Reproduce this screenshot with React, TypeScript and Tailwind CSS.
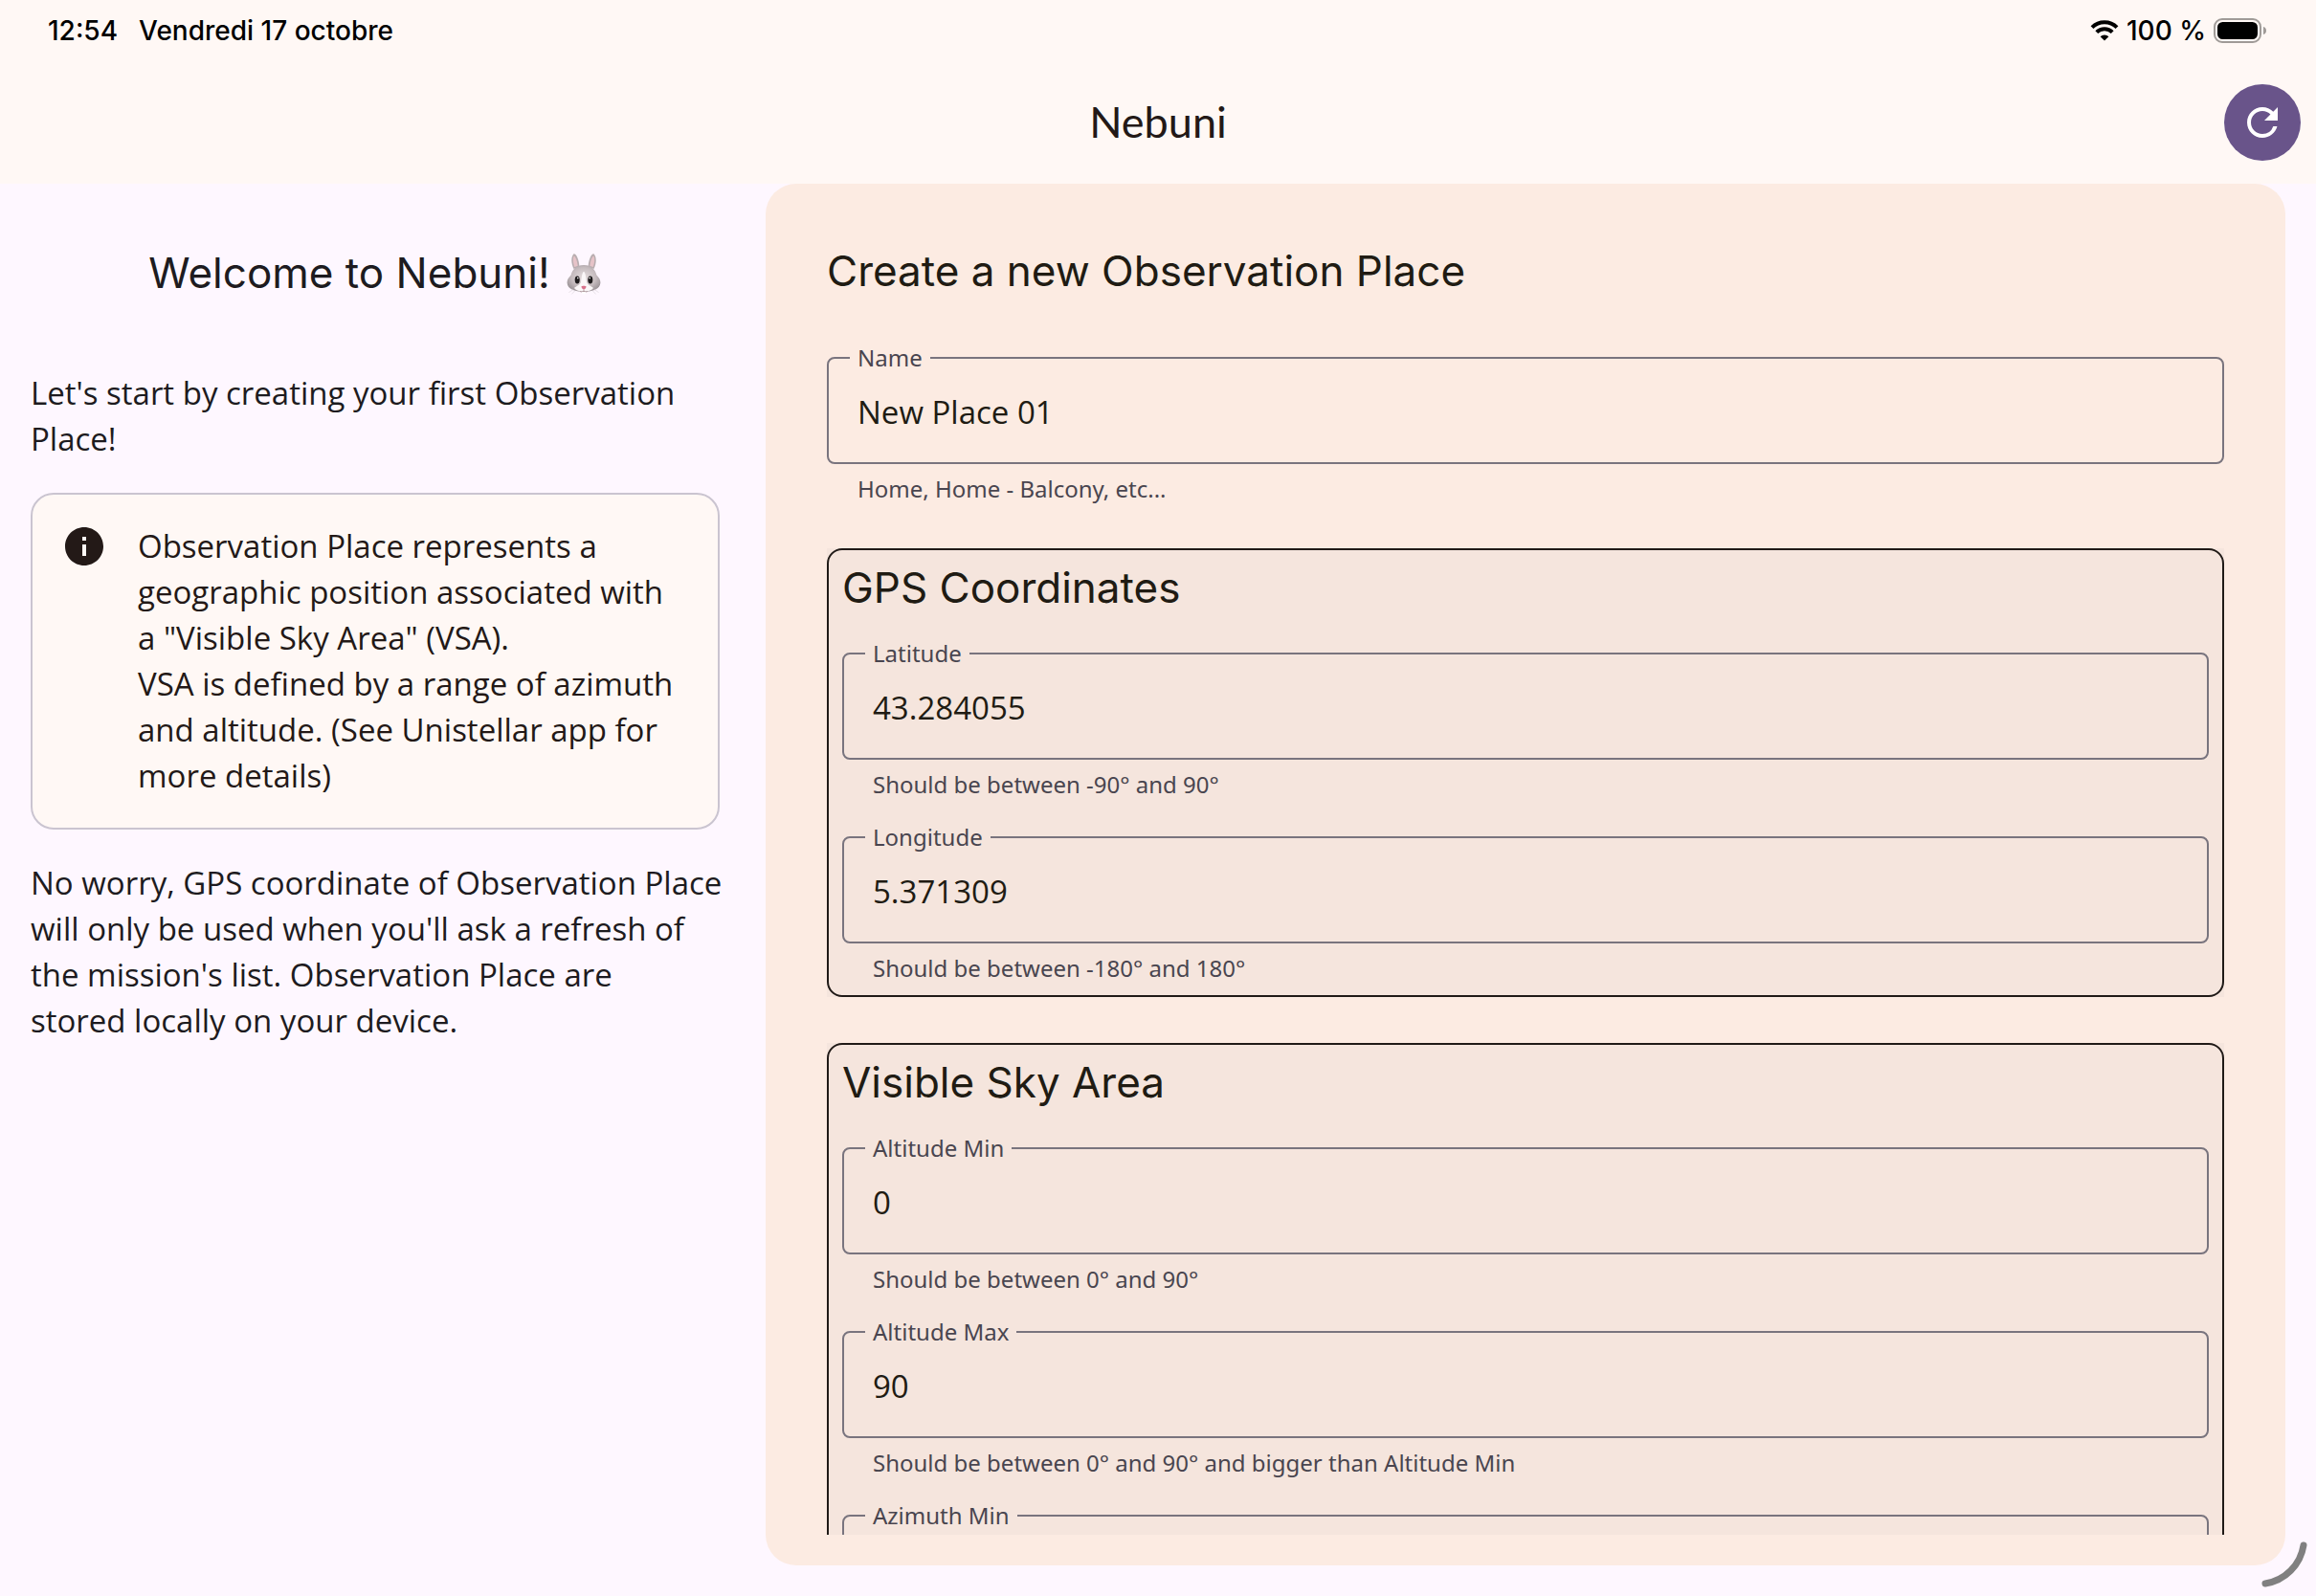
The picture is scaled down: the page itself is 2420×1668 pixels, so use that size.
import React, { useId } from 'react';
import { MdInfo, MdRefresh } from 'react-icons/md';

function WifiIcon() {
  return (
    <svg width="30" height="22" viewBox="0 0 30 22" fill="none" aria-label="Wi-Fi" role="img">
      <path d="M2 7.6A18.6 18.6 0 0 1 28 7.6" stroke="#000" strokeWidth="4" />
      <path d="M6.8 12.6A11.6 11.6 0 0 1 23.2 12.6" stroke="#000" strokeWidth="4" />
      <path d="M15 21.4L10.6 17.2A6.4 6.4 0 0 1 19.4 17.2Z" fill="#000" />
    </svg>
  );
}

function BatteryIcon() {
  return (
    <svg width="56" height="26" viewBox="0 0 56 26" fill="none" aria-label="Battery" role="img">
      <rect x="1" y="1" width="48" height="24" rx="8" stroke="#a09b98" strokeWidth="2" />
      <rect x="4" y="4" width="42" height="18" rx="5.5" fill="#000" />
      <path d="M52 9C54 9.6 55 11 55 13S54 16.4 52 17Z" fill="#a09b98" />
    </svg>
  );
}

function RabbitFace() {
  return (
    <svg width="38" height="44" viewBox="0 0 38 44" fill="none" aria-label="rabbit" role="img">
      <defs>
        <radialGradient id="fur" cx="0.5" cy="0.45" r="0.6">
          <stop offset="0" stopColor="#e4dcdd" />
          <stop offset="0.6" stopColor="#c6bcbf" />
          <stop offset="1" stopColor="#989094" />
        </radialGradient>
      </defs>
      <path d="M8.5 17C5.5 11 5.6 4 8.4 1.4C11 .8 14 7 14.4 15Z" fill="#b8adb0" />
      <path d="M29.5 17C32.5 11 32.4 4 29.6 1.4C27 .8 24 7 23.6 15Z" fill="#b8adb0" />
      <path d="M9.2 15C7.4 10 7.5 5.4 8.8 3.6C10.6 4.6 12.2 9 12.6 14Z" fill="#e6c3c8" />
      <path d="M28.8 15C30.6 10 30.5 5.4 29.2 3.6C27.4 4.6 25.8 9 25.4 14Z" fill="#e6c3c8" />
      <path d="M19 13C27 13 31 18 32.4 23.5C34.8 26 36.6 28.6 36.4 31.6C36 38 29 41 19 41S2 38 1.6 31.6C1.4 28.6 3.2 26 5.6 23.5C7 18 11 13 19 13Z" fill="url(#fur)" />
      <path d="M19 20C20.8 20 21.2 27 22.2 31.5C24 34.4 28 35.6 29 37C27 39.8 23.6 40.6 19 40.6S11 39.8 9 37C10 35.6 14 34.4 15.8 31.5C16.8 27 17.2 20 19 20Z" fill="#fbf7f8" />
      <ellipse cx="12.2" cy="28.4" rx="2.5" ry="4" fill="#1e1b1c" />
      <ellipse cx="25.8" cy="28.4" rx="2.5" ry="4" fill="#1e1b1c" />
      <circle cx="12.8" cy="26.6" r="0.8" fill="#fff" />
      <circle cx="25.2" cy="26.6" r="0.8" fill="#fff" />
      <path d="M16.4 35.4C17 34.4 21 34.4 21.6 35.4C21.2 37.2 20 38.4 19 38.6C18 38.4 16.8 37.2 16.4 35.4Z" fill="#d9738c" />
      <path d="M19 38.6V40.4M19 40.4C17.6 41.4 16 41 15 40.4M19 40.4C20.4 41.4 22 41 23 40.4" stroke="#a5898f" strokeWidth="0.8" />
      <path d="M17.2 41H20.8V43.4H17.2Z" fill="#fff" />
      <path d="M8 38.6L3.4 41.6M9.6 40L6.4 43.4M30 38.6L34.6 41.6M28.4 40L31.6 43.4" stroke="#d8d0d6" strokeWidth="0.6" />
    </svg>
  );
}

type FieldProps = { label: string; value: string; helper?: string };

function Field({ label, value, helper }: FieldProps) {
  const id = useId();
  return (
    <div>
      <fieldset className="-mt-[11px] rounded-lg border-2 border-[#79747e] px-[22px] pb-[9px]">
        <legend className="px-2 font-['Noto_Sans',sans-serif] text-2xl leading-6 text-[#49454f]">
          <label htmlFor={id}>{label}</label>
        </legend>
        <input
          id={id}
          type="text"
          defaultValue={value}
          aria-describedby={`${id}-helper`}
          className="block h-[88px] w-full bg-transparent px-2 text-[33px] text-[#201b13] outline-none"
        />
      </fieldset>
      <p
        id={`${id}-helper`}
        className="mt-2 min-h-9 px-8 font-['Noto_Sans',sans-serif] text-2xl leading-9 text-[#49454f]"
      >
        {helper}
      </p>
    </div>
  );
}

function Section({ title, children }: { title: string; children: React.ReactNode }) {
  return (
    <section className="bg-[#f5e5dd]">
      <div className="rounded-2xl border-2 border-[#201a17] px-[14px] pt-2 pb-[10px]">
        <h3 className="mb-9 font-[Inter,sans-serif] text-[44px] leading-[63px] text-[#201b13]">{title}</h3>
        <div className="flex flex-col gap-9">{children}</div>
      </div>
    </section>
  );
}

export default function App() {
  return (
    <div className="relative flex h-screen flex-col overflow-hidden bg-[#fef7ff] font-['Open_Sans',sans-serif] text-[#1d1b20]">
      <header className="shrink-0 bg-[#fff8f5]">
        <div className="flex h-16 items-center justify-between pr-[51px] pl-[50px] font-[Inter,sans-serif] text-[28px] font-medium text-black">
          <div className="flex gap-[22px]">
            <span>12:54</span>
            <span>Vendredi 17 octobre</span>
          </div>
          <div className="flex items-center gap-2">
            <WifiIcon />
            <span>100 %</span>
            <BatteryIcon />
          </div>
        </div>
        <div className="grid h-32 grid-cols-3 items-center px-4">
          <h1 className="col-start-2 text-center font-[Lato,sans-serif] text-[45px] text-[#231917]">Nebuni</h1>
          <button
            type="button"
            aria-label="Refresh"
            className="flex size-20 items-center justify-center justify-self-end rounded-full bg-[#69548a] text-white"
          >
            <MdRefresh size={48} />
          </button>
        </div>
      </header>

      <main className="grid min-h-0 flex-1 grid-cols-[784fr_1588fr] gap-4 pr-8 pb-8">
        <div className="min-w-0 px-8 pt-[62px] text-[33px] leading-[48px]">
          <h2 className="mb-[70px] flex items-center justify-center gap-4 font-[Inter,sans-serif] text-[44px] leading-[63px]">
            Welcome to Nebuni! <RabbitFace />
          </h2>
          <p className="whitespace-nowrap">
            Let's start by creating your first Observation
            <br />
            Place!
          </p>
          <div className="my-8 flex gap-8 rounded-3xl border-2 border-[#cac4d0] bg-[#fff8f5] p-[30px] text-[#231917]">
            <MdInfo size={48} className="shrink-0" />
            <p className="whitespace-nowrap">
              Observation Place represents a
              <br />
              geographic position associated with
              <br />
              a "Visible Sky Area" (VSA).
              <br />
              VSA is defined by a range of azimuth
              <br />
              and altitude. (See Unistellar app for
              <br />
              more details)
            </p>
          </div>
          <p className="whitespace-nowrap">
            No worry, GPS coordinate of Observation Place
            <br />
            will only be used when you'll ask a refresh of
            <br />
            the mission's list. Observation Place are
            <br />
            stored locally on your device.
          </p>
        </div>

        <div className="flex min-h-0 min-w-0 flex-col rounded-4xl bg-[#fcebe2] px-16 pb-8">
          <form className="min-h-0 flex-1 overflow-y-auto pt-[60px] [scrollbar-width:none]">
            <h2 className="mb-[58px] font-[Inter,sans-serif] text-[44px] leading-[63px] text-[#201b13]">
              Create a new Observation Place
            </h2>
            <Field label="Name" value="New Place 01" helper="Home, Home - Balcony, etc..." />
            <div className="mt-11 flex flex-col gap-12">
              <Section title="GPS Coordinates">
                <Field label="Latitude" value="43.284055" helper="Should be between -90° and 90°" />
                <Field label="Longitude" value="5.371309" helper="Should be between -180° and 180°" />
              </Section>
              <Section title="Visible Sky Area">
                <Field label="Altitude Min" value="0" helper="Should be between 0° and 90°" />
                <Field label="Altitude Max" value="90" helper="Should be between 0° and 90° and bigger than Altitude Min" />
                <Field label="Azimuth Min" value="0" />
              </Section>
            </div>
          </form>
        </div>
      </main>

      <svg className="absolute right-[6px] bottom-[6px]" width="54" height="54" viewBox="0 0 54 54" fill="none" aria-hidden="true">
        <path d="M47 7A48 48 0 0 1 7 47" stroke="#808080" strokeWidth="7" strokeLinecap="round" />
      </svg>
    </div>
  );
}
